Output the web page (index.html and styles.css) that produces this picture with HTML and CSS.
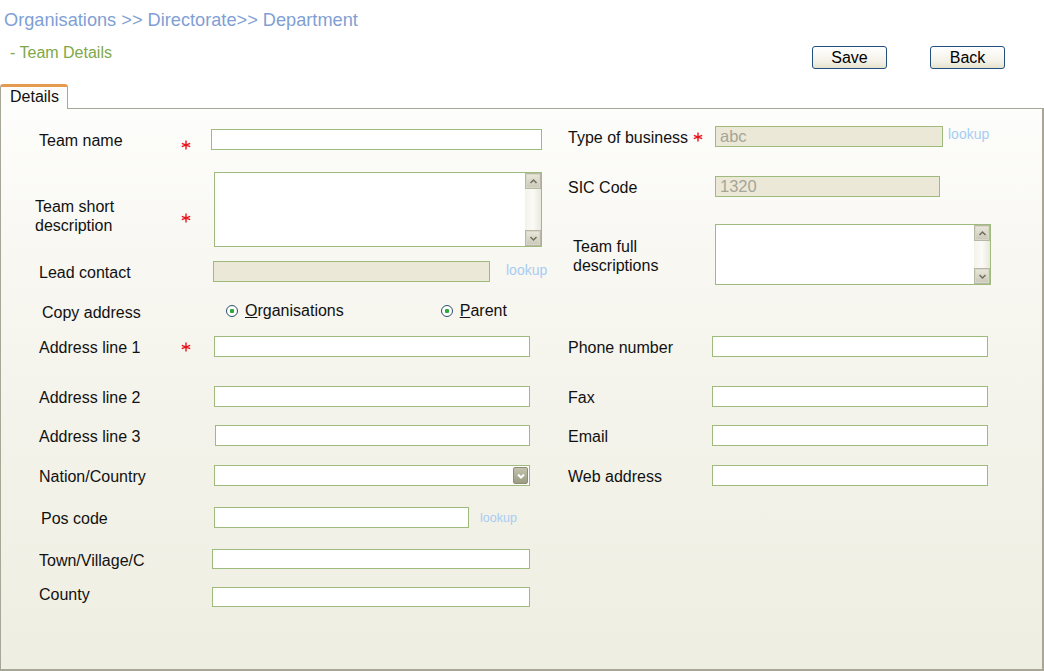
FILE: index.html
```html
<!DOCTYPE html>
<html>
<head>
<meta charset="utf-8">
<title>Team Details</title>
<link rel="stylesheet" href="styles.css">
</head>
<body>
<div class="crumb">Organisations &gt;&gt; Directorate&gt;&gt; Department</div>
<div class="sub">
  <div class="title">- Team Details</div>
  <div class="actions">
    <button class="btn">Save</button>
    <button class="btn">Back</button>
  </div>
</div>
<div class="tabs"><div class="tab">Details</div><div class="tab-rest"></div></div>
<div class="panel">
  <div class="top">
    <div class="col-left">
      <div class="field h21">
        <span class="lbl">Team name</span>
        <span class="req req-low"><svg viewBox="0 0 10 10" width="10" height="10"><path d="M5 0.5V9.5M0.8 3.3L9.2 6.7M0.8 6.7L9.2 3.3" stroke="#e8131c" stroke-width="1.4" fill="none"/></svg></span>
        <input class="box w331" type="text">
      </div>
      <div class="field h75 mt22">
        <span class="lbl lbl-two ml-4">Team short<br>description</span>
        <span class="req req-low2"><svg viewBox="0 0 10 10" width="10" height="10"><path d="M5 0.5V9.5M0.8 3.3L9.2 6.7M0.8 6.7L9.2 3.3" stroke="#e8131c" stroke-width="1.4" fill="none"/></svg></span>
        <div class="ta-wrap w328 ml3">
          <textarea class="ta"></textarea>
          <div class="vscroll">
            <div class="sbtn"><svg viewBox="0 0 9 9" width="9" height="9"><path d="M1.5 6L4.5 3L7.5 6" stroke="#6f6f60" stroke-width="1.5" fill="none"/></svg></div>
            <div class="strack"></div>
            <div class="sbtn"><svg viewBox="0 0 9 9" width="9" height="9"><path d="M1.5 3L4.5 6L7.5 3" stroke="#6f6f60" stroke-width="1.5" fill="none"/></svg></div>
          </div>
        </div>
      </div>
      <div class="field h21 mt14">
        <span class="lbl">Lead contact</span>
        <span class="req"></span>
        <input class="box dis w277 ml2" type="text" disabled>
        <a class="lookup lk-lead">lookup</a>
      </div>
      <div class="field h20 mt19">
        <span class="lbl ml3">Copy address</span>
        <span class="req"></span>
        <label class="radio r-org"><span class="dot"></span><span><u>O</u>rganisations</span></label>
        <label class="radio r-par"><span class="dot"></span><span><u>P</u>arent</span></label>
      </div>
    </div>
    <div class="col-right">
      <div class="field h21">
        <span class="lbl rlbl">Type of business</span>
        <span class="req rreq"><svg viewBox="0 0 10 10" width="10" height="10"><path d="M5 0.5V9.5M0.8 3.3L9.2 6.7M0.8 6.7L9.2 3.3" stroke="#e8131c" stroke-width="1.4" fill="none"/></svg></span>
        <input class="box dis w228" type="text" value="abc" disabled>
        <a class="lookup lk-type">lookup</a>
      </div>
      <div class="field h21 mt29">
        <span class="lbl rlbl">SIC Code</span>
        <span class="req rreq"></span>
        <input class="box dis w225" type="text" value="1320" disabled>
      </div>
      <div class="field h61 mt27">
        <span class="lbl rlbl ml5">Team full<br>descriptions</span>
        <span class="req rreq"></span>
        <div class="ta-wrap w276">
          <textarea class="ta"></textarea>
          <div class="vscroll">
            <div class="sbtn"><svg viewBox="0 0 9 9" width="9" height="9"><path d="M1.5 6L4.5 3L7.5 6" stroke="#6f6f60" stroke-width="1.5" fill="none"/></svg></div>
            <div class="strack"></div>
            <div class="sbtn"><svg viewBox="0 0 9 9" width="9" height="9"><path d="M1.5 3L4.5 6L7.5 3" stroke="#6f6f60" stroke-width="1.5" fill="none"/></svg></div>
          </div>
        </div>
      </div>
    </div>
  </div>

  <div class="pair mt15">
    <div class="field h21 cell-l">
      <span class="lbl">Address line 1</span>
      <span class="req"><svg viewBox="0 0 10 10" width="10" height="10"><path d="M5 0.5V9.5M0.8 3.3L9.2 6.7M0.8 6.7L9.2 3.3" stroke="#e8131c" stroke-width="1.4" fill="none"/></svg></span>
      <input class="box w316 ml3" type="text">
    </div>
    <div class="field h21 cell-r">
      <span class="lbl rlbl">Phone number</span>
      <span class="req rreq"></span>
      <input class="box w276 ml-3" type="text">
    </div>
  </div>
  <div class="pair mt29">
    <div class="field h21 cell-l">
      <span class="lbl">Address line 2</span>
      <span class="req"></span>
      <input class="box w316 ml3" type="text">
    </div>
    <div class="field h21 cell-r">
      <span class="lbl rlbl">Fax</span>
      <span class="req rreq"></span>
      <input class="box w276 ml-3" type="text">
    </div>
  </div>
  <div class="pair mt18">
    <div class="field h21 cell-l">
      <span class="lbl">Address line 3</span>
      <span class="req"></span>
      <input class="box w315 ml4" type="text">
    </div>
    <div class="field h21 cell-r">
      <span class="lbl rlbl">Email</span>
      <span class="req rreq"></span>
      <input class="box w276 ml-3" type="text">
    </div>
  </div>
  <div class="pair mt19">
    <div class="field h21 cell-l">
      <span class="lbl">Nation/Country</span>
      <span class="req"></span>
      <div class="select w316 ml3">
        <span class="sel-btn"><svg viewBox="0 0 10 10" width="10" height="10"><path d="M2 3.5L5 6.5L8 3.5" stroke="#ffffff" stroke-width="2" fill="none"/></svg></span>
      </div>
    </div>
    <div class="field h21 cell-r">
      <span class="lbl rlbl">Web address</span>
      <span class="req rreq"></span>
      <input class="box w276 ml-3" type="text">
    </div>
  </div>
  <div class="pair mt21">
    <div class="field h21 cell-l">
      <span class="lbl ml2">Pos code</span>
      <span class="req"></span>
      <input class="box w255 ml3" type="text">
      <a class="lookup lk-pos">lookup</a>
    </div>
  </div>
  <div class="pair mt21">
    <div class="field h20 cell-l">
      <span class="lbl">Town/Village/C</span>
      <span class="req"></span>
      <input class="box w318 ml1" type="text">
    </div>
  </div>
  <div class="pair mt18">
    <div class="field h20 cell-l">
      <span class="lbl lbl-up">County</span>
      <span class="req"></span>
      <input class="box w318 ml1" type="text">
    </div>
  </div>
</div>
</body>
</html>
```

FILE: styles.css
```css
* { box-sizing: border-box; }
html, body { margin: 0; padding: 0; background: #ffffff; }
body {
  font-family: "Liberation Sans", Arial, sans-serif;
  color: #111111;
  width: 1044px;
  height: 671px;
  overflow: hidden;
}

.crumb {
  height: 40px;
  line-height: 40px;
  padding-left: 4px;
  font-size: 18.2px;
  color: #7f9fd4;
}

.sub {
  height: 44px;
  display: flex;
  justify-content: space-between;
  align-items: flex-start;
}
.title {
  line-height: 26px;
  padding-left: 10px;
  font-size: 16px;
  color: #7ea84a;
}
.actions {
  display: flex;
  gap: 43px;
  padding-right: 39px;
  padding-top: 6px;
}
.btn {
  width: 75px;
  height: 23px;
  border: 1px solid #21507f;
  border-radius: 3px;
  background: linear-gradient(#ffffff, #f3f1e6 70%, #e6e2cf);
  font-family: "Liberation Sans", Arial, sans-serif;
  font-size: 16px;
  color: #000;
  padding: 0;
  line-height: 20px;
}

.tabs {
  height: 24px;
  display: flex;
}
.tab {
  width: 68px;
  border: 1px solid #a8a797;
  border-bottom: none;
  border-top: 3px solid #e59a4f;
  border-radius: 3px 3px 0 0;
  background: #fdfdfb;
  font-size: 16px;
  line-height: 19px;
  padding-left: 9px;
  position: relative;
  z-index: 1;
  margin-bottom: -1px;
  height: 25px;
}
.tab-rest { flex: 1; }

.panel {
  height: 563px;
  border: 1px solid #a8a797;
  border-right-width: 2px;
  border-bottom-width: 2px;
  background: linear-gradient(#fdfdfb, #f6f5ee 40%, #efeee2);
}

.top { display: flex; }
.col-left {
  width: 549px;
  padding-left: 38px;
  padding-top: 20px;
}
.col-right {
  padding-left: 18px;
  padding-top: 17px;
}

.field {
  display: flex;
  align-items: center;
  font-size: 16px;
}
.h20 { height: 20px; }
.h21 { height: 21px; }
.h61 { height: 61px; }
.h75 { height: 75px; }
.mt14 { margin-top: 14px; }
.mt15 { margin-top: 15px; }
.mt18 { margin-top: 18px; }
.mt19 { margin-top: 19px; }
.mt21 { margin-top: 21px; }
.mt22 { margin-top: 22px; }
.mt27 { margin-top: 27px; }
.mt29 { margin-top: 29px; }

.lbl {
  width: 142px;
  flex: none;
  white-space: nowrap;
  line-height: 19px;
  padding-top: 2px;
}
.rlbl { width: 125px; }
.lbl.lbl-two { padding-top: 12px; }
.lbl.lbl-up { padding-top: 0; padding-bottom: 5px; }
.ml-4 { margin-left: -4px; width: 146px; }
.ml5.lbl { margin-left: 5px; width: 120px; }
.ml3.lbl { margin-left: 3px; width: 139px; }
.ml2.lbl { margin-left: 2px; width: 140px; }

.req {
  width: 30px;
  flex: none;
  display: flex;
  align-items: center;
  height: 10px;
}
.rreq { width: 22px; }
.req svg { display: block; }
.req-low { margin-top: 11px; }
.req-low2 { margin-top: 17px; }

.box {
  height: 100%;
  border: 1px solid #9fba7d;
  background: #ffffff;
  font-family: "Liberation Sans", Arial, sans-serif;
  font-size: 16.5px;
  padding: 0 4px;
  margin: 0;
  flex: none;
  outline: none;
}
.dis {
  background: #ebe8d8;
  color: #a6a596;
  -webkit-text-fill-color: #a6a596;
  opacity: 1;
}
.ml1 { margin-left: 1px; }
.ml2 { margin-left: 2px; }
.ml3 { margin-left: 3px; }
.ml4 { margin-left: 4px; }
.ml-3 { margin-left: -3px; }
.w225 { width: 225px; }
.w228 { width: 228px; }
.w255 { width: 255px; }
.w276 { width: 276px; }
.w277 { width: 277px; }
.w315 { width: 315px; }
.w316 { width: 316px; }
.w318 { width: 318px; }
.w328 { width: 328px; }
.w331 { width: 331px; }

.lookup {
  color: #a8ccf3;
  font-size: 14px;
  flex: none;
}
.lk-lead { margin-left: 16px; margin-top: -3px; }
.lk-type { margin-left: 5px; margin-top: -5px; }
.lk-pos { margin-left: 11px; font-size: 12.5px; }

.ta-wrap {
  height: 100%;
  border: 1px solid #9fba7d;
  background: #ffffff;
  display: flex;
  flex: none;
}
.ta {
  flex: 1;
  border: none;
  resize: none;
  outline: none;
  background: transparent;
  margin: 0;
  padding: 2px;
}
.vscroll {
  width: 16px;
  display: flex;
  flex-direction: column;
  background: linear-gradient(90deg, #f3f2ea, #fbfbf7 50%, #e9e8dc);
}
.strack { flex: 1; }
.sbtn {
  width: 16px;
  height: 16px;
  border: 1px solid #ffffff;
  outline: 1px solid #b8b7a6;
  outline-offset: -1px;
  background: linear-gradient(#e9e8dc, #c9c8b8);
  display: flex;
  align-items: center;
  justify-content: center;
  box-shadow: inset 0 0 0 1px #d9d8c8;
}
.sbtn svg { display: block; }

.radio {
  display: flex;
  align-items: center;
  gap: 7px;
  flex: none;
}
.r-org { margin-left: 15px; }
.r-par { margin-left: 97px; }
.dot {
  width: 12px;
  height: 12px;
  border-radius: 50%;
  border: 1px solid #2d4f6f;
  background: radial-gradient(circle, #2eaa3c 0 2px, #ffffff 2.5px);
  display: block;
}

.pair {
  display: grid;
  grid-template-columns: 549px 1fr;
}
.cell-l { padding-left: 38px; }
.cell-r { padding-left: 18px; }

.select {
  height: 100%;
  border: 1px solid #9fba7d;
  background: #ffffff;
  display: flex;
  justify-content: flex-end;
  align-items: center;
  padding-right: 1px;
  flex: none;
}
.sel-btn {
  width: 15px;
  height: 17px;
  border: 1px solid #8e8e76;
  border-radius: 2px;
  background: linear-gradient(#c3c3ad, #9c9c84);
  display: flex;
  align-items: center;
  justify-content: center;
}
.sel-btn svg { display: block; }
```
